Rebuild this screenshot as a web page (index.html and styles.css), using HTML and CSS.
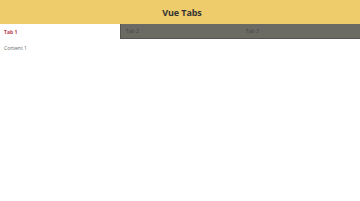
FILE: index.html
```html
<!DOCTYPE html>
<html>
<head>
<meta charset="utf-8">
<link rel="stylesheet" href="styles.css">
</head>
<body>
<header class="header"><h1 class="title">Vue Tabs</h1></header>
<nav class="tabs">
  <div class="tab active">Tab 1</div>
  <div class="tab">Tab 2</div>
  <div class="tab">Tab 3</div>
</nav>
<div class="content">Content 1</div>
</body>
</html>
```
FILE: styles.css
```css
html, body { margin: 0; padding: 0; background: #fff; }
body { font-family: "Open Sans", "Liberation Sans", sans-serif; width: 360px; height: 201px; }
.header { height: 24px; background: #eecb6b; display: flex; align-items: center; justify-content: center; }
.title { margin: 0 0 0 4px; font-size: 9px; font-weight: 700; color: #333; letter-spacing: -0.1px; }
.tabs { display: grid; grid-template-columns: repeat(3, 1fr); height: 15px; }
.tab { font-size: 5px; color: #444; background: #6b6b63; padding-left: 5px; display: flex; align-items: center; box-sizing: border-box; border-bottom: 1px solid #55554f; }
.tab:nth-child(2) { border-left: 1px solid #55554f; }
.tab:nth-child(3) { padding-left: 6px; }
.tab.active { background: #fff; color: #b8384c; font-weight: 700; border: none; padding-left: 4px; }
.content { font-size: 5px; color: #666; padding: 6px 4px; }
```
